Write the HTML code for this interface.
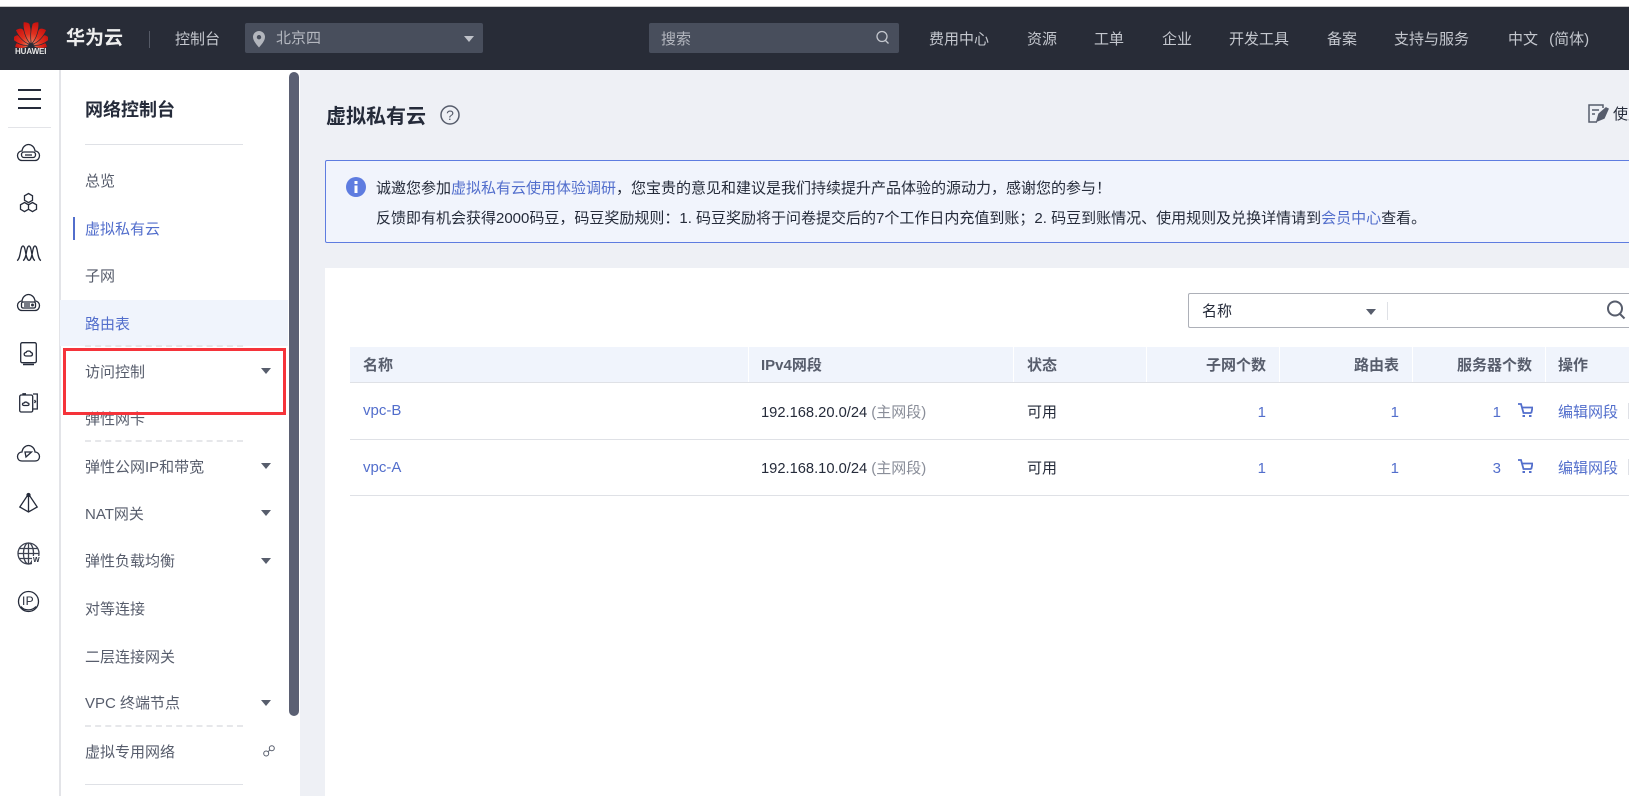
<!DOCTYPE html>
<html lang="zh-CN"><head><meta charset="utf-8"><title>虚拟私有云</title>
<style>
html,body{margin:0;padding:0;width:1629px;height:796px;overflow:hidden;background:#fff}
body{position:relative;font-family:"Liberation Sans","Noto Sans CJK SC",sans-serif;font-size:15px;color:#252b3a}
.a{position:absolute}
.t{position:absolute;white-space:nowrap;line-height:20px;height:20px}
.r{text-align:right}
.h{color:#c4c7ce}
.n{left:85px;color:#575d6c}
.b{color:#526ecc}
.th{font-weight:700;color:#575d6c;top:356px}
.tri{position:absolute;width:0;height:0;border-left:5px solid transparent;border-right:5px solid transparent;border-top:6px solid #575d6c}
.ln{position:absolute;left:85px;width:158px;height:0}
.sv{position:absolute;overflow:visible;fill:none;stroke:#252b3a;stroke-width:1.3}
.sep{position:absolute;top:347px;width:1px;height:35px;background:#fff}
.row{position:absolute;left:350px;width:1279px;height:1px;background:#dfe1e6}
</style></head><body>
<div class="a" style="left:0;top:0;width:1629px;height:6px;background:#fff"></div>
<div class="a" style="left:0;top:6px;width:1629px;height:1px;background:#c9c9c9"></div>
<div class="a" style="left:0;top:7px;width:1629px;height:63px;background:#282c37"></div>

<svg class="a" style="left:14px;top:20px" width="34" height="28" viewBox="0 0 34 28">
<defs><linearGradient id="g" x1="0" y1="1" x2="0" y2="0"><stop offset="0" stop-color="#f08060"/><stop offset=".45" stop-color="#e0301e"/><stop offset="1" stop-color="#c8100e"/></linearGradient></defs>
<g transform="translate(17,26)" fill="url(#g)" stroke="#282c37" stroke-width=".7">
<path transform="rotate(-84)" d="M0-2C-3-5-4-10-3-16 0-16 2-15 3-13 3-8 2-5 0-2Z"/>
<path transform="rotate(84) scale(-1,1)" d="M0-2C-3-5-4-10-3-16 0-16 2-15 3-13 3-8 2-5 0-2Z"/>
<path transform="rotate(-60)" d="M0-2C-4-6-5-13-3.500-20-1-20 2-19 3-17 3-11 2-6 0-2Z"/>
<path transform="rotate(60) scale(-1,1)" d="M0-2C-4-6-5-13-3.500-20-1-20 2-19 3-17 3-11 2-6 0-2Z"/>
<path transform="rotate(-35)" d="M0-2C-4-7-5-15-3.500-22-1-22 2-21 3-19 3.500-12 2-7 0-2Z"/>
<path transform="rotate(35) scale(-1,1)" d="M0-2C-4-7-5-15-3.500-22-1-22 2-21 3-19 3.500-12 2-7 0-2Z"/>
<path transform="rotate(-11)" d="M0-2C-4-8-5-18-3-25-1-25 2-24 3-22 3.500-14 2-7 0-2Z"/>
<path transform="rotate(11) scale(-1,1)" d="M0-2C-4-8-5-18-3-25-1-25 2-24 3-22 3.500-14 2-7 0-2Z"/>
</g></svg>
<div class="t" style="left:15px;top:42px;font-size:8px;font-weight:700;color:#e6e6e6;letter-spacing:-.1px">HUAWEI</div>
<div class="t" style="left:66px;top:29px;font-size:19px;font-weight:700;color:#eee">华为云</div>
<div class="a" style="left:149px;top:31px;width:1px;height:17px;background:#555a66"></div>
<div class="t h" style="left:175px;top:30px">控制台</div>
<div class="a" style="left:245px;top:23px;width:238px;height:30px;background:#484e5c;border-radius:2px"></div>
<svg class="a" style="left:252px;top:31px" width="14" height="17" viewBox="0 0 14 17"><path fill="#b3b6bd" fill-rule="evenodd" d="M7 0a6 6 0 0 1 6 6c0 4-4 8-6 10.500C5 14 1 10 1 6a6 6 0 0 1 6-6zm0 4a2.200 2.200 0 1 0 0 4.400A2.200 2.200 0 0 0 7 4z"/></svg>
<div class="t" style="left:276px;top:29px;color:#b4b7bf">北京四</div>
<div class="tri" style="left:464px;top:36px;border-top-color:#bfc2c9"></div>
<div class="a" style="left:649px;top:23px;width:250px;height:30px;background:#484e5c;border-radius:2px"></div>
<div class="t" style="left:661px;top:30px;color:#b4b7bf">搜索</div>
<svg class="a" style="left:875px;top:30px" width="15" height="15" viewBox="0 0 15 15" fill="none" stroke="#c4c7ce" stroke-width="1.300"><circle cx="7" cy="6.500" r="5"/><path d="M10.500 10.500l3 3"/></svg>
<div class="t h" style="left:929px;top:30px">费用中心</div>
<div class="t h" style="left:1027px;top:30px">资源</div>
<div class="t h" style="left:1094px;top:30px">工单</div>
<div class="t h" style="left:1162px;top:30px">企业</div>
<div class="t h" style="left:1229px;top:30px">开发工具</div>
<div class="t h" style="left:1327px;top:30px">备案</div>
<div class="t h" style="left:1394px;top:30px">支持与服务</div>
<div class="t h" style="left:1508px;top:30px;word-spacing:7px">中文 (简体)</div>

<!-- icon column -->
<div class="a" style="left:59px;top:70px;width:2px;height:726px;background:#e3e4e8"></div>
<div class="a" style="left:18px;top:89px;width:23px;height:2px;background:#252b3a"></div>
<div class="a" style="left:18px;top:98px;width:23px;height:2px;background:#252b3a"></div>
<div class="a" style="left:18px;top:107px;width:23px;height:2px;background:#252b3a"></div>
<div class="a" style="left:8px;top:127px;width:43px;height:1px;background:#e3e4e8"></div>

<svg class="sv" style="left:17px;top:144px" width="23" height="18" viewBox="0 0 23 18"><path d="M6 16.500H5C2 16.500.5 14 .5 11.500S2.500 7 5 7c.5-4 3.500-6.500 6.500-6.500S17.500 3 18 7c2.500 0 4.500 2 4.500 4.500s-1.500 5-4.500 5z"/><rect x="4.500" y="8" width="14" height="5.500" rx="2.500"/><path d="M8 11h7"/></svg>
<svg class="sv" style="left:19px;top:193px" width="19" height="20" viewBox="0 0 19 20"><path d="M9.500.5l4 2.300v4.500l-4 2.300-4-2.300V2.800zM5.500 9.500l4 2.300v4.500l-4 2.300-4-2.300v-4.500zM13.500 9.500l4 2.300v4.500l-4 2.300-4-2.300v-4.500z"/></svg>
<svg class="sv" style="left:17px;top:245px" width="24" height="16" viewBox="0 0 24 16"><path d="M0 15.500C4 14 3 1 6 1s2 13 6 14.500M6 15.500C10 14 9 1 12 1s2 13 6 14.500M12 15.500C16 14 15 1 18 1s2 13 6 14.500"/></svg>
<svg class="sv" style="left:17px;top:294px" width="23" height="18" viewBox="0 0 23 18"><path d="M6 16.500H5C2 16.500.5 14 .5 11.500S2.500 7 5 7c.5-4 3.500-6.500 6.500-6.500S17.500 3 18 7c2.500 0 4.500 2 4.500 4.500s-1.500 5-4.500 5z"/><rect x="4.500" y="8" width="14" height="6" rx="1.500"/><path d="M7 10h6M7 12h6"/><circle cx="15.500" cy="11" r=".8"/></svg>
<svg class="sv" style="left:20px;top:342px" width="17" height="23" viewBox="0 0 17 23"><rect x=".7" y=".7" width="15.600" height="20" rx="1.500"/><path d="M3 22.500h11" stroke-width="1.500"/><path d="M6.500 14c-3 0-3-3.500-.5-3.500.5-2 4.500-2 5 0 2 .2 2 3.500-.5 3.500z"/></svg>
<svg class="sv" style="left:19px;top:393px" width="19" height="20" viewBox="0 0 19 20"><rect x=".7" y="2" width="13" height="17" rx="1.500"/><path d="M4 2V.8l3 .0M14 1h4.300v15H14"/><path d="M5 12.500c-2 0-2-2.500 0-2.500 1-1.500 3-1 3.500 0 2 0 2 2.500 0 2.500z"/><path d="M15.500 7l1 1.500-1 1.500"/></svg>
<svg class="sv" style="left:17px;top:445px" width="23" height="17" viewBox="0 0 23 17"><path d="M5 16C2 16 .5 14 .5 11.500S2.500 7 5 7c.5-4 3.500-6.500 6.500-6.500S17.500 3 18 7c2.500 0 4.500 2 4.500 4.500S21 16 18 16z"/><path d="M8 7h6.500L9 12z"/></svg>
<svg class="sv" style="left:19px;top:493px" width="19" height="20" viewBox="0 0 19 20"><path d="M9.500 1L.8 14l8.700 5 8.700-5zM9.500 1v18"/><circle cx="9.500" cy="2" r="1.500" fill="#252b3a"/></svg>
<svg class="sv" style="left:17px;top:542px;stroke:#3c4150" width="23" height="23" viewBox="0 0 23 23"><circle cx="11.500" cy="11.500" r="10.500"/><ellipse cx="11.500" cy="11.500" rx="5" ry="10.500"/><path d="M1 11.500h21M2.500 6.500h18M2.500 16.500h18M11.500 1v21"/></svg>
<div class="t" style="left:32px;top:549px;font-size:7px;font-weight:700;color:#252b3a;background:#fff;line-height:9px;height:9px;margin-top:7px;padding:0 1px">W</div>
<svg class="sv" style="left:18px;top:591px" width="21" height="21" viewBox="0 0 21 21"><circle cx="10.500" cy="10.500" r="10"/><path d="M3 15.500c3 4.500 11 4.500 15 0" /></svg>
<div class="t" style="left:22px;top:591px;font-size:12px;color:#252b3a;letter-spacing:.3px">IP</div>

<!-- nav -->
<div class="t" style="left:85px;top:100px;font-size:18px;font-weight:700;color:#252b3a">网络控制台</div>
<div class="ln" style="top:144px;border-top:1px solid #dfe1e6"></div>
<div class="t n" style="top:172px">总览</div>
<div class="a" style="left:73px;top:217px;width:2px;height:23px;background:#526ecc"></div>
<div class="t n" style="top:220px;color:#526ecc">虚拟私有云</div>
<div class="t n" style="top:267px">子网</div>
<div class="a" style="left:60px;top:300px;width:228px;height:46px;background:#f0f4fc"></div>
<div class="t n" style="top:315px;color:#526ecc">路由表</div>
<div class="ln" style="top:345px;border-top:2px dashed #e6e7ea"></div>
<div class="t n" style="top:363px">访问控制</div>
<div class="tri" style="left:261px;top:368px"></div>
<div class="t n" style="top:410px">弹性网卡</div>
<div class="ln" style="top:440px;border-top:2px dashed #e6e7ea"></div>
<div class="t n" style="top:458px">弹性公网IP和带宽</div>
<div class="tri" style="left:261px;top:463px"></div>
<div class="t n" style="top:505px">NAT网关</div>
<div class="tri" style="left:261px;top:510px"></div>
<div class="t n" style="top:552px">弹性负载均衡</div>
<div class="tri" style="left:261px;top:558px"></div>
<div class="t n" style="top:600px">对等连接</div>
<div class="t n" style="top:648px">二层连接网关</div>
<div class="t n" style="top:694px">VPC 终端节点</div>
<div class="tri" style="left:261px;top:700px"></div>
<div class="ln" style="top:725px;border-top:2px dashed #e6e7ea"></div>
<div class="t n" style="top:743px">虚拟专用网络</div>
<svg class="a" style="left:263px;top:745px" width="12" height="12" viewBox="0 0 12 12" fill="none" stroke="#575d6c" stroke-width="1"><circle cx="3.200" cy="8.500" r="2.500"/><circle cx="8.800" cy="3.200" r="2.500"/><path d="M5 6.800l2-2"/></svg>
<div class="ln" style="top:784px;border-top:1px solid #dfe1e6"></div>
<div class="a" style="left:289px;top:72px;width:10px;height:644px;background:#5b6073;border-radius:5px"></div>

<!-- main -->
<div class="a" style="left:300px;top:70px;width:1329px;height:726px;background:#eef0f5"></div>
<div class="t" style="left:326px;top:107px;font-size:20px;font-weight:700;color:#252b3a">虚拟私有云</div>
<svg class="a" style="left:440px;top:105px" width="20" height="20" viewBox="0 0 20 20"><circle cx="10" cy="10" r="9" fill="none" stroke="#575d6c" stroke-width="1.500"/><text x="10" y="15" font-size="14" text-anchor="middle" fill="#575d6c" font-family="Liberation Sans">?</text></svg>
<svg class="a" style="left:1588px;top:104px" width="21" height="19" viewBox="0 0 21 19" fill="none" stroke="#575d6c" stroke-width="1.500"><path d="M15 4V1H1v17h8"/><path d="M4 6h7M4 10h3" /><path d="M9 17l2-7 7-6 2 1-4 9z" fill="#575d6c"/></svg>
<div class="t" style="left:1613px;top:105px;color:#252b3a;font-size:15px">使用指南</div>

<div class="a" style="left:325px;top:160px;width:1310px;height:81px;background:#f1f4fc;border:1px solid #5e7ce0;border-radius:2px"></div>
<svg class="a" style="left:346px;top:177px" width="20" height="20" viewBox="0 0 20 20"><circle cx="10" cy="10" r="10" fill="#5e7ce0"/><rect x="8.500" y="4" width="3" height="3" fill="#fff"/><rect x="8.500" y="8.500" width="3" height="7.500" fill="#fff"/></svg>
<div class="t" style="left:376px;top:179px;color:#252b3a">诚邀您参加<span class="b">虚拟私有云使用体验调研</span>，您宝贵的意见和建议是我们持续提升产品体验的源动力，感谢您的参与！</div>
<div class="t" style="left:376px;top:209px;color:#252b3a">反馈即有机会获得2000码豆，码豆奖励规则：1. 码豆奖励将于问卷提交后的7个工作日内充值到账；2. 码豆到账情况、使用规则及兑换详情请到<span class="b">会员中心</span>查看。</div>

<div class="a" style="left:325px;top:268px;width:1304px;height:528px;background:#fff"></div>
<div class="a" style="left:1188px;top:293px;width:441px;height:33px;border:1px solid #adb0b8;border-right:0;border-radius:2px 0 0 2px;background:#fff"></div>
<div class="t" style="left:1202px;top:302px;font-size:15px;color:#252b3a">名称</div>
<div class="tri" style="left:1366px;top:309px"></div>
<div class="a" style="left:1387px;top:302px;width:1px;height:18px;background:#dfe1e6"></div>
<svg class="a" style="left:1606px;top:300px" width="20" height="20" viewBox="0 0 20 20" fill="none" stroke="#575d6c" stroke-width="2"><circle cx="9" cy="8.500" r="7"/><path d="M14 14l4.500 4.500"/></svg>

<div class="a" style="left:350px;top:347px;width:1279px;height:35px;background:#f0f4fc"></div>
<div class="sep" style="left:748px"></div><div class="sep" style="left:1013px"></div><div class="sep" style="left:1146px"></div><div class="sep" style="left:1279px"></div><div class="sep" style="left:1412px"></div><div class="sep" style="left:1545px"></div>
<div class="row" style="top:382px"></div><div class="row" style="top:439px"></div><div class="row" style="top:495px"></div>
<div class="t th" style="left:363px">名称</div>
<div class="t th" style="left:761px">IPv4网段</div>
<div class="t th" style="left:1027px">状态</div>
<div class="t th r" style="left:1166px;width:100px">子网个数</div>
<div class="t th r" style="left:1299px;width:100px">路由表</div>
<div class="t th r" style="left:1432px;width:100px">服务器个数</div>
<div class="t th" style="left:1558px">操作</div>

<div class="t b" style="left:363px;top:401px">vpc-B</div>
<div class="t" style="left:761px;top:403px;font-size:14.700px">192.168.20.0/24 <span style="color:#8a8e99;font-size:15px">(主网段)</span></div>
<div class="t" style="left:1027px;top:403px">可用</div>
<div class="t b r" style="left:1166px;top:403px;width:100px">1</div>
<div class="t b r" style="left:1299px;top:403px;width:100px">1</div>
<div class="t b r" style="left:1401px;top:403px;width:100px">1</div>
<svg class="a" style="left:1518px;top:403px" width="15" height="14" viewBox="0 0 15 14" fill="none" stroke="#526ecc" stroke-width="1.800"><path d="M0 1h3l2.500 9h8"/><path d="M4 4.500h10.500l-1.200 5.500"/><rect x="4.500" y="12" width="2.500" height="2.500" fill="#526ecc" stroke="none"/><rect x="11" y="12" width="2.500" height="2.500" fill="#526ecc" stroke="none"/></svg>
<div class="t b" style="left:1558px;top:403px">编辑网段</div>
<div class="a" style="left:1628px;top:403px;width:1px;height:16px;background:#dfe1e6"></div>

<div class="t b" style="left:363px;top:458px">vpc-A</div>
<div class="t" style="left:761px;top:459px;font-size:14.700px">192.168.10.0/24 <span style="color:#8a8e99;font-size:15px">(主网段)</span></div>
<div class="t" style="left:1027px;top:459px">可用</div>
<div class="t b r" style="left:1166px;top:459px;width:100px">1</div>
<div class="t b r" style="left:1299px;top:459px;width:100px">1</div>
<div class="t b r" style="left:1401px;top:459px;width:100px">3</div>
<svg class="a" style="left:1518px;top:459px" width="15" height="14" viewBox="0 0 15 14" fill="none" stroke="#526ecc" stroke-width="1.800"><path d="M0 1h3l2.500 9h8"/><path d="M4 4.500h10.500l-1.200 5.500"/><rect x="4.500" y="12" width="2.500" height="2.500" fill="#526ecc" stroke="none"/><rect x="11" y="12" width="2.500" height="2.500" fill="#526ecc" stroke="none"/></svg>
<div class="t b" style="left:1558px;top:459px">编辑网段</div>
<div class="a" style="left:1628px;top:459px;width:1px;height:16px;background:#dfe1e6"></div>

<!-- red annotation -->
<div class="a" style="left:63px;top:348px;width:217px;height:61px;border:3px solid #f5333a"></div>
</body></html>
